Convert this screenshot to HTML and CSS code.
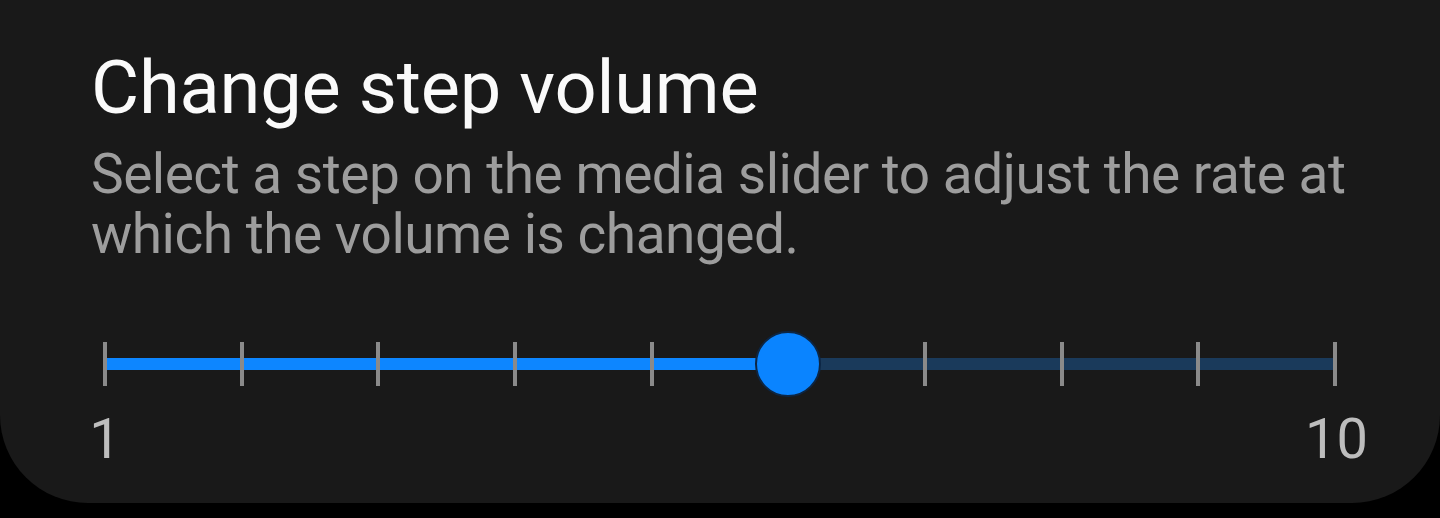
FILE: index.html
```html
<!DOCTYPE html>
<html lang="en">

<head>
    <meta charset="UTF-8">
    <meta name="viewport" content="width=device-width, initial-scale=1.0">
    <title>Change step volume</title>
    <link rel="stylesheet" href="styles.css">
</head>

<body>
    <div class="card">
        <!-- Header -->
        <h1 class="title">Change step volume</h1>
        <p class="desc">Select a step on the media slider to adjust the rate at which the volume is changed.</p>

        <!-- Step slider -->
        <div class="slider">
            <div class="rail">
                <div class="track">
                    <div class="fill" style="width: 55.6%;"></div>
                </div>
                <div class="ticks">
                    <span class="tick"></span>
                    <span class="tick"></span>
                    <span class="tick"></span>
                    <span class="tick"></span>
                    <span class="tick"></span>
                    <span class="tick"></span>
                    <span class="tick"></span>
                    <span class="tick"></span>
                    <span class="tick"></span>
                    <span class="tick"></span>
                </div>
                <div class="thumb-layer">
                    <span class="thumb" style="left: 55.556%;"></span>
                </div>
            </div>
            <div class="labels">
                <span class="label">1</span>
                <span class="label">10</span>
            </div>
        </div>
    </div>
</body>

</html>
```

FILE: styles.css
```css
* {
    margin: 0;
    padding: 0;
    box-sizing: border-box;
}

body {
    font-family: Roboto, "Liberation Sans", sans-serif;
    background-color: #000;
}

.card {
    height: 503px;
    padding: 44px 60px 0 91px;
    background-color: #191919;
    border-radius: 0 0 88px 88px;
}

.title {
    font-size: 74px;
    font-weight: 400;
    line-height: 88px;
    letter-spacing: -0.2px;
    color: #fafafa;
}

.desc {
    margin-top: 12px;
    font-size: 55px;
    line-height: 60px;
    letter-spacing: -0.5px;
    color: #9d9d9d;
}

.slider {
    margin: 67px 0 0 12px;
    width: 1234px;
}

/* track, ticks and thumb share one grid cell */
.rail {
    display: grid;
    height: 66px;
}

.rail > * {
    grid-area: 1 / 1;
}

.track {
    align-self: center;
    height: 12px;
    margin: 0 4px;
    background-color: #1a3a5b;
}

.fill {
    height: 100%;
    background-color: #0d86ff;
}

.ticks {
    display: flex;
    justify-content: space-between;
    align-items: center;
}

.tick {
    width: 4px;
    height: 44px;
    background-color: #8a8a8a;
}

.thumb-layer {
    position: relative;
    margin: 0 2px;
}

.thumb {
    position: absolute;
    top: 0;
    width: 66px;
    height: 66px;
    margin-left: -33px;
    border-radius: 50%;
    background-color: #0a84ff;
    border: 2px solid #0d2644;
}

.labels {
    display: flex;
    justify-content: space-between;
    margin: 10px -28px 0 -28px;
}

.label {
    width: 60px;
    text-align: center;
    font-size: 56px;
    line-height: 64px;
    color: #bdbdbd;
}
```
